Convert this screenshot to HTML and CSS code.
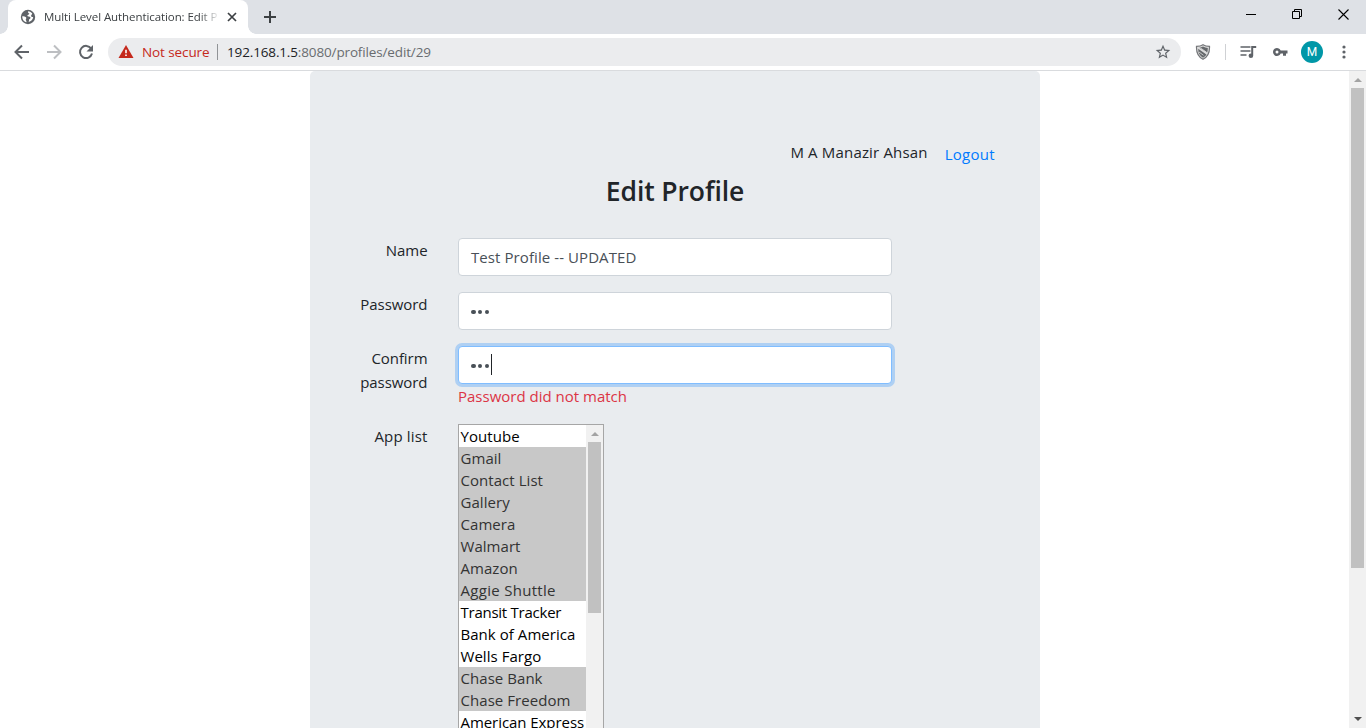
FILE: index.html
```html
<!DOCTYPE html>
<html lang="en">
<head>
<meta charset="utf-8">
<title>Multi Level Authentication: Edit Profile</title>
<link rel="stylesheet" href="styles.css">
</head>
<body>
<header class="tabstrip">
  <div class="tab">
    <svg class="globe" width="16" height="16" viewBox="0 0 16 16"><circle cx="8" cy="8" r="7.200" fill="#5f6368"/><path d="M8.200 2.200c-.5 1.400.2 2 1.200 2.300-.3 1.500-1.800 1.200-2.200 2.200.4 1 2.600.3 3.200 1.500.3 1-.3 1.700-1.100 1.900l-.6 2.800c2.300-.4 4.300-2.400 4.500-4.900-1.400.2-1.900-.4-2.300-1.300.9-.6.700-1.400 1.400-2.200C11.300 3.200 9.800 2.200 8.200 2.200zM2.300 7.300c1 .1 3.600.2 4 1.500.2 1-.6 1.200-.5 2 .1.700.8.900.7 2.500C4 12.700 2 10.300 2.300 7.300z" fill="#fff"/></svg>
    <span class="tab-title">Multi Level Authentication: Edit P</span>
    <svg class="tab-close" width="10" height="10" viewBox="0 0 10 10"><path d="M1 1l8 8M9 1L1 9" stroke="#3c4043" stroke-width="1.700"/></svg>
  </div>
  <svg class="new-tab" width="12" height="12" viewBox="0 0 12 12"><path d="M6 0v12M0 6h12" stroke="#3c4043" stroke-width="2"/></svg>
  <div class="window-buttons">
    <svg width="10" height="10" viewBox="0 0 10 10"><path d="M0 5.500h10" stroke="#000"/></svg>
    <svg width="10" height="10" viewBox="0 0 10 10"><path d="M.5 2.500h7v7h-7zM2.500 2.500v-2h7v7h-2" fill="none" stroke="#000"/></svg>
    <svg width="11" height="11" viewBox="0 0 11 11"><path d="M.5.5l10 10M10.500.5l-10 10" stroke="#000" stroke-width="1.100"/></svg>
  </div>
</header>
<nav class="toolbar">
  <svg class="back" width="16" height="16" viewBox="0 0 16 16"><path d="M15 8H2M8 1.500L1.500 8 8 14.500" fill="none" stroke="#5f6368" stroke-width="2"/></svg>
  <svg class="forward" width="16" height="16" viewBox="0 0 16 16"><path d="M1 8h13M8 1.500L14.500 8 8 14.500" fill="none" stroke="#bdbfc2" stroke-width="2"/></svg>
  <svg class="reload" width="16" height="16" viewBox="0 0 16 16"><path d="M13.200 4.600A6.100 6.100 0 1 0 14 9.600" fill="none" stroke="#5f6368" stroke-width="2"/><path d="M15 1v6.500H8.500z" fill="#5f6368"/></svg>
  <div class="omnibox">
    <svg class="warning" width="16" height="14" viewBox="0 0 16 14"><path d="M8 0l7.500 13H.5z" fill="#c5291c"/><path d="M7.200 4.800h1.600v3.500H7.200zM7.200 9.500h1.600v1.600H7.200z" fill="#fff"/></svg>
    <span class="insecure">Not secure</span>
    <span class="url"><span class="host">192.168.1.5</span>:8080/profiles/edit/29</span>
    <svg class="star" width="16" height="16" viewBox="1 1 22 22"><path fill="#5f6368" d="M22 9.240l-7.190-.62L12 2 9.190 8.630 2 9.240l5.460 4.730L5.820 21 12 17.270 18.180 21l-1.630-7.030L22 9.240zM12 15.400l-3.760 2.270 1-4.280-3.320-2.880 4.380-.38L12 6.100l1.710 4.040 4.380.38-3.320 2.880 1 4.280L12 15.400z"/></svg>
  </div>
  <svg class="shield" width="16" height="16" viewBox="0 0 16 16"><path d="M8 .7C10 2 12.500 2.300 14.500 2.300c.3 6-1.500 10.500-6.500 13C3 12.800 1.200 8.300 1.500 2.300 3.500 2.300 6 2 8 .7z" fill="#ddd" stroke="#747679" stroke-width="1.200"/><path d="M8 2.600c1.600.9 3.200 1.200 4.800 1.300 0 1.800-.2 3.200-.6 4.500L4.400 3.800C5.700 3.600 6.900 3.200 8 2.600zM3.200 4.800l8.200 5.700c-.8 1.400-1.800 2.300-3.400 3.200-3.500-2-4.800-4.700-4.800-8.900z" fill="#65686b"/><path d="M5.500 4l6 4.200M4 8l4.500 3.300" stroke="#ddd" stroke-width=".8"/></svg>
  <span class="divider"></span>
  <svg class="media" width="17" height="14" viewBox="0 0 17 14"><path d="M.5 2h10M.5 6h10M.5 10h6" stroke="#5f6368" stroke-width="1.700"/><path d="M12.200 10.500V2h4" fill="none" stroke="#5f6368" stroke-width="2"/><circle cx="10.900" cy="10.800" r="2.300" fill="#5f6368"/></svg>
  <svg class="key" width="15" height="10" viewBox="0 0 15 10"><path d="M7.700 3.500a4 4 0 1 0 0 3H10v2.300h3V6.500h1.500v-3z" fill="#5f6368"/><circle cx="4" cy="5" r="1.500" fill="#fff"/></svg>
  <span class="avatar">M</span>
  <svg class="menu" width="4" height="14" viewBox="0 0 4 14"><g fill="#5f6368"><circle cx="2" cy="2" r="1.600"/><circle cx="2" cy="7" r="1.600"/><circle cx="2" cy="12" r="1.600"/></g></svg>
</nav>
<div class="viewport">
  <main class="card">
    <div class="account"><span class="username">M A Manazir Ahsan</span><a class="logout">Logout</a></div>
    <h1 class="title">Edit Profile</h1>
    <form class="form">
      <label class="label">Name</label>
      <div class="field"><div class="input name-input">Test Profile -- UPDATED</div></div>
      <label class="label">Password</label>
      <div class="field"><div class="input"><span class="dots"><i></i><i></i><i></i></span></div></div>
      <label class="label">Confirm<br>password</label>
      <div class="field">
        <div class="input focused"><span class="dots"><i></i><i></i><i></i></span><span class="caret"></span></div>
        <div class="error">Password did not match</div>
      </div>
      <label class="label label-apps">App list</label>
      <div class="field">
        <div class="listbox">
          <ul class="options">
            <li>Youtube</li>
            <li class="selected">Gmail</li>
            <li class="selected">Contact List</li>
            <li class="selected">Gallery</li>
            <li class="selected">Camera</li>
            <li class="selected">Walmart</li>
            <li class="selected">Amazon</li>
            <li class="selected wide">Aggie Shuttle</li>
            <li class="narrow">Transit Tracker</li>
            <li>Bank of America</li>
            <li>Wells Fargo</li>
            <li class="selected">Chase Bank</li>
            <li class="selected">Chase Freedom</li>
            <li class="last">American Express</li>
          </ul>
          <div class="scrollbar"><span class="arrow-up"></span><span class="thumb list-thumb"></span></div>
        </div>
      </div>
    </form>
  </main>
  <aside class="scrollbar page-scrollbar"><span class="arrow-up"></span><span class="thumb page-thumb"></span><span class="arrow-down"></span></aside>
</div>
</body>
</html>
```
FILE: styles.css
```css
* { box-sizing: border-box; }
body {
  margin: 0;
  width: 1366px;
  height: 728px;
  overflow: hidden;
  display: flex;
  flex-direction: column;
  background: #fff;
  color: #212529;
  font: 15px/24px "Open Sans", "Noto Sans", sans-serif;
  white-space: nowrap;
}
svg { display: block; flex: none; }

/* Browser frame */
.tabstrip { height: 34px; flex: none; display: flex; background: #dee1e6; }
.tab {
  position: relative;
  width: 240px;
  margin-left: 8px;
  display: flex;
  align-items: center;
  background: #fff;
  border-radius: 8px 8px 0 0;
}
.tab::before, .tab::after {
  content: "";
  position: absolute;
  bottom: 0;
  width: 8px;
  height: 8px;
}
.tab::before { left: -8px; background: radial-gradient(circle at 0 0, #dee1e6 7.500px, #fff 8px); }
.tab::after { right: -8px; background: radial-gradient(circle at 100% 0, #dee1e6 7.500px, #fff 8px); }
.globe { margin-left: 12px; }
.tab-title {
  width: 174px;
  margin-left: 8px;
  overflow: hidden;
  font-size: 11.500px;
  letter-spacing: -0.080px;
  color: #3c4043;
  -webkit-mask-image: linear-gradient(90deg, #000 155px, transparent 176px);
  mask-image: linear-gradient(90deg, #000 155px, transparent 176px);
}
.tab-close { margin-left: 9px; }
.new-tab { margin: 11px 0 0 16px; }
.window-buttons { display: flex; gap: 36px; margin: 9px 17px 0 auto; }
.toolbar {
  height: 37px;
  flex: none;
  display: flex;
  align-items: center;
  padding-left: 14px;
  border-bottom: 1px solid #d9dbde;
}
.forward, .reload { margin-left: 16px; }
.omnibox {
  width: 1073px;
  height: 28px;
  margin-left: 14px;
  padding: 0 10px;
  display: flex;
  align-items: center;
  border-radius: 14px;
  background: #ebecee;
  font-size: 13.500px;
}
.insecure {
  width: 76px;
  height: 16px;
  line-height: 16px;
  margin-left: 8px;
  border-right: 1px solid #909396;
  color: #c5291c;
  letter-spacing: -0.100px;
}
.url { margin-left: 9px; color: #696c70; letter-spacing: -0.140px; }
.host { color: #202124; }
.star { margin-left: auto; }
.shield { margin-left: 14px; }
.divider { width: 1px; height: 16px; margin-left: 14px; background: #cfd1d4; }
.media { margin-left: 14px; }
.key { margin-left: 16px; }
.avatar {
  width: 22px;
  height: 22px;
  margin-left: 13px;
  border-radius: 50%;
  background: #0097a7;
  color: #fff;
  font: 12px/22px Roboto, sans-serif;
  text-align: center;
}
.menu { margin-left: 19px; }

/* Page */
.viewport { flex: 1; min-height: 0; display: flex; overflow: hidden; }
.card {
  width: 730px;
  margin-left: 310px;
  padding: 69px 45px 0 30px;
  border-radius: 5px 5px 0 0;
  background: #e9ecef;
}
.account { display: flex; justify-content: flex-end; gap: 17px; }
.username { letter-spacing: 0.170px; }
.logout { padding-top: 2px; color: #007bff; letter-spacing: 0.300px; }
.title {
  margin: 8px -15px 30px 0;
  font-size: 26.500px;
  line-height: 34px;
  font-weight: 550;
  letter-spacing: -0.100px;
  text-align: center;
}
.form { display: grid; grid-template-columns: 88px 434px; column-gap: 30px; row-gap: 16px; }
.label { height: 38px; padding-right: 0.500px; text-align: right; letter-spacing: -0.060px; }
.label-apps { letter-spacing: 0.150px; }
.input {
  height: 38px;
  padding: 0 12px;
  display: flex;
  align-items: center;
  border: 1px solid #ced4da;
  border-radius: 4px;
  background: #fff;
  color: #495057;
}
.name-input { letter-spacing: 0.080px; }
.focused { border-color: #80bdff; box-shadow: 0 0 0 3px #afd0f3; }
.dots { display: flex; gap: 2.300px; padding: 2px 0.500px 0 0; }
.dots i { width: 4.500px; height: 4.500px; border-radius: 50%; background: #495057; }
.caret { width: 1px; height: 21px; margin: 0 0 2px 1px; background: #212529; }
.error { color: #dc3545; }
.listbox {
  width: 146px;
  height: 330px;
  display: flex;
  overflow: hidden;
  border: 1px solid #a6a6a6;
  background: #fff;
}
.options { flex: 1; min-width: 0; margin: 0; padding: 0; list-style: none; color: #000; }
.options li { height: 22px; padding-left: 1.500px; line-height: 22px; letter-spacing: 0.050px; }
.options .selected { background: #c8c8c8; color: #333; }
.options .wide { letter-spacing: 0.300px; }
.options .narrow { letter-spacing: -0.250px; }
.options .last { letter-spacing: -0.060px; }

/* Scrollbars */
.scrollbar {
  width: 17px;
  flex: none;
  display: flex;
  flex-direction: column;
  align-items: center;
  background: #f1f1f1;
}
.page-scrollbar { margin-left: auto; }
.arrow-up, .arrow-down { border: 4px solid transparent; }
.arrow-up { height: 4px; margin: 7px 0 6px; border-top: 0; border-bottom-color: #a3a3a3; }
.arrow-down { height: 4px; margin: auto 0 7px; border-bottom: 0; border-top-color: #505050; }
.thumb { width: 13px; background: #c1c1c1; }
.list-thumb { height: 171px; }
.page-thumb { height: 480px; }
```
